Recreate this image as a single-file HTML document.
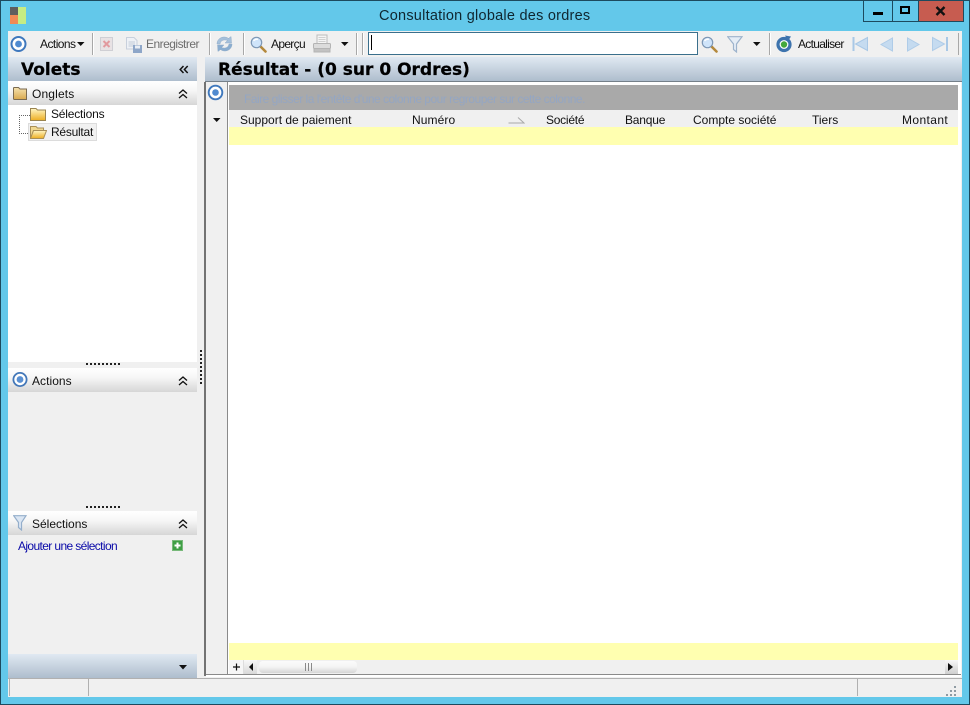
<!DOCTYPE html>
<html lang="fr"><head><meta charset="utf-8"><title>Consultation globale des ordres</title>
<style>
html,body{margin:0;padding:0;width:970px;height:705px;overflow:hidden;background:#63c8ea}
body{position:relative;font-family:"Liberation Sans",sans-serif;font-size:12px;color:#111}
div,span,svg{position:absolute;box-sizing:border-box}
.t{white-space:nowrap;line-height:14px}
.g{color:#6d6d6d}
.sep{width:1px;top:33px;height:22px;background:#a8a8a8;box-shadow:1px 0 0 #fff}
.ph{left:8px;width:189px;height:24px;background:linear-gradient(#fff 0%,#f6f6f6 40%,#d6d6d6 100%)}
.blue{background:linear-gradient(#e0e9f2,#aebdcd)}
.dots{left:86px;width:34px;height:2px;background:repeating-linear-gradient(90deg,#222 0 2px,transparent 2px 4px)}
.h{font-family:"DejaVu Sans",sans-serif;font-weight:bold;font-size:17px;color:#000;line-height:22px;white-space:nowrap;-webkit-text-stroke:.25px #000}
</style></head><body>
<div style="left:0;top:0;width:970px;height:705px;border:1px solid #1d4a5e"></div>

<!-- title bar -->
<svg style="left:10px;top:7px" width="16" height="17"><rect x="0" y="0" width="8" height="8" fill="#5e5e5e"/><rect x="0" y="8" width="8" height="9" fill="#f08a55"/><rect x="8" y="0" width="8" height="17" fill="#c6ec84"/></svg>
<div class="t" style="left:379px;top:8px;font-size:14.5px;line-height:17px;color:#0f2630;letter-spacing:.24px">Consultation globale des ordres</div>
<div style="left:863px;top:1px;width:29px;height:21px;border:1px solid #1d4a5e;border-top:0;border-right:0"></div>
<div style="left:892px;top:1px;width:26px;height:21px;border:1px solid #1d4a5e;border-top:0;border-right:0"></div>
<div style="left:918px;top:1px;width:46px;height:21px;background:#c75c50;border:1px solid #1d4a5e;border-top:0"></div>
<div style="left:873px;top:12px;width:10px;height:3px;background:#000"></div>
<div style="left:900px;top:6px;width:10px;height:8px;border:2px solid #000"></div>
<svg style="left:935px;top:6px" width="11" height="10"><path d="M1.5 1 L9.5 9 M9.5 1 L1.5 9" stroke="#111" stroke-width="2.4"/></svg>

<!-- client -->
<div style="left:8px;top:31px;width:954px;height:666px;background:#f0f0f0"></div>

<!-- toolbar -->
<svg style="left:10px;top:35px" width="18" height="18"><circle cx="8.5" cy="9" r="7" fill="#fff" stroke="#3f78bd" stroke-width="2"/><circle cx="8.5" cy="9" r="3.4" fill="#4f8ad0"/></svg>
<div class="t" style="left:40px;top:37px;letter-spacing:-.55px">Actions</div>
<svg style="left:77px;top:42px" width="8" height="5"><path d="M0 0H7.5L3.7 4Z" fill="#111"/></svg>
<div class="sep" style="left:92px"></div>
<svg style="left:100px;top:36px" width="14" height="16"><rect x=".5" y="1.5" width="12" height="13" fill="#e8e2e4" stroke="#cfcfd4"/><path d="M3.5 5 L9.5 11 M9.5 5 L3.5 11" stroke="#e29a9f" stroke-width="2"/></svg>
<svg style="left:126px;top:36px" width="17" height="17"><path d="M.5 1.5H8L11 4.5V13H.5Z" fill="#eef1f6" stroke="#c8d0dc"/><path d="M2.5 6H9M2.5 8H9M2.5 10H9" stroke="#c3cbd8"/><rect x="7" y="9" width="9" height="8" fill="#8ea6c8"/><rect x="9" y="9.5" width="5" height="3" fill="#e9eef5"/></svg>
<div class="t g" style="left:146px;top:37px;letter-spacing:-.52px">Enregistrer</div>
<div class="sep" style="left:209px"></div>
<svg style="left:216px;top:35px" width="17" height="18"><path d="M1 9 C1 3 8 0 12.5 3.5 L15 1.5 L15.5 8 L9 8 L11.5 5.5 C8 4 4.5 5.5 4 9Z" fill="#a5c0db" stroke="#8fabc7" stroke-width=".5"/><path d="M16 9 C16 15 9 18 4.5 14.5 L2 16.5 L1.5 10 L8 10 L5.5 12.5 C9 14 12.5 12.5 13 9Z" fill="#8aadd0" stroke="#8fabc7" stroke-width=".5"/></svg>
<div class="sep" style="left:243px"></div>
<svg style="left:250px;top:36px" width="17" height="17"><path d="M10 10 L15.5 15.5" stroke="#b4893c" stroke-width="2.6" stroke-linecap="round"/><circle cx="6.5" cy="6.5" r="5.2" fill="#cfe4fa" stroke="#7d97b5" stroke-width="1.2"/><path d="M3.5 5 Q5 3 8 3.2" stroke="#fff" stroke-width="1.4" fill="none"/></svg>
<div class="t" style="left:271px;top:37px;letter-spacing:-.68px">Aperçu</div>
<svg style="left:313px;top:34px" width="18" height="19"><rect x="4" y="1" width="10" height="9" fill="#f5f5f5" stroke="#bcbcbc"/><path d="M5.5 3.5H12.5M5.5 5.5H12.5M5.5 7.5H12.5" stroke="#d0d0d0"/><rect x=".5" y="9.5" width="17" height="5" rx="1" fill="#dcdcdc" stroke="#b4b4b4"/><rect x="1" y="14.5" width="16" height="3.5" fill="#c2c2c2" stroke="#b4b4b4"/></svg>
<svg style="left:341px;top:42px" width="8" height="5"><path d="M0 0H7.5L3.7 4Z" fill="#111"/></svg>
<div class="sep" style="left:356px"></div><div class="sep" style="left:362px"></div>
<div style="left:368px;top:32px;width:330px;height:23px;background:#fff;border:1px solid #3a6f8c"></div>
<div style="left:371px;top:35px;width:1px;height:15px;background:#000"></div>
<svg style="left:701px;top:36px" width="17" height="17"><path d="M10 10 L15.5 15.5" stroke="#b4893c" stroke-width="2.6" stroke-linecap="round"/><circle cx="6.5" cy="6.5" r="5.2" fill="#cfe4fa" stroke="#7d97b5" stroke-width="1.2"/><path d="M3.5 5 Q5 3 8 3.2" stroke="#fff" stroke-width="1.4" fill="none"/></svg>
<svg style="left:727px;top:36px" width="16" height="17"><path d="M.7 .7H15L9.5 8V16L6.5 13.5V8Z" fill="#e5edf6" stroke="#9db3cc" stroke-width="1.2"/></svg>
<svg style="left:753px;top:42px" width="8" height="5"><path d="M0 0H7.5L3.7 4Z" fill="#111"/></svg>
<div class="sep" style="left:769px"></div>
<svg style="left:775px;top:35px" width="18" height="18"><circle cx="9" cy="9.5" r="6" fill="#fff" stroke="#3d73ad" stroke-width="3.2"/><circle cx="9" cy="9.5" r="3.2" fill="#45a83c"/><path d="M10 .5 L16 1.5 L13 6Z" fill="#3d73ad"/></svg>
<div class="t" style="left:798px;top:37px;letter-spacing:-.7px">Actualiser</div>
<svg style="left:852px;top:36px" width="18" height="16"><path d="M1.5 1V15" stroke="#a9c8e6" stroke-width="2"/><path d="M15.5 1.5V14.5L3.5 8Z" fill="#c5dbf0" stroke="#a9c8e6"/></svg>
<svg style="left:880px;top:37px" width="14" height="15"><path d="M12.5 1V14L1 7.5Z" fill="#c5dbf0" stroke="#afcce8"/></svg>
<svg style="left:906px;top:37px" width="14" height="15"><path d="M1.5 1V14L13 7.5Z" fill="#c5dbf0" stroke="#afcce8"/></svg>
<svg style="left:931px;top:36px" width="18" height="16"><path d="M16 1V15" stroke="#a9c8e6" stroke-width="2"/><path d="M1.5 1.5V14.5L13.5 8Z" fill="#c5dbf0" stroke="#afcce8"/></svg>
<div class="sep" style="left:958px;box-shadow:none"></div>

<!-- left panel -->
<div class="blue" style="left:8px;top:57px;width:189px;height:24px"></div>
<div class="h" style="left:21px;top:59px">Volets</div>
<svg style="left:179px;top:65px" width="10" height="9"><path d="M4.5 1L1.2 4.5L4.5 8M8.7 1L5.4 4.5L8.7 8" fill="none" stroke="#111" stroke-width="1.5"/></svg>

<div class="ph" style="top:81px"></div>
<svg style="left:13px;top:86px" width="15" height="14"><defs><linearGradient id="a" x1="0" y1="0" x2="0" y2="1"><stop offset="0" stop-color="#f5e2ae"/><stop offset="1" stop-color="#d9a94e"/></linearGradient><linearGradient id="b" x1="0" y1="0" x2="0" y2="1"><stop offset="0" stop-color="#fff6c4"/><stop offset="1" stop-color="#edae22"/></linearGradient></defs><path d="M.5 2V12.5A1 1 0 0 0 1.5 13.5H13.5V3H7L5.5 1.5H1Z" fill="url(#a)" stroke="#7a6a50"/></svg>
<div class="t" style="left:32px;top:87px;letter-spacing:.15px">Onglets</div>
<svg style="left:178px;top:89px" width="10" height="10"><path d="M1 4.5L5 1L9 4.5M1 9L5 5.5L9 9" fill="none" stroke="#111" stroke-width="1.3"/></svg>

<div style="left:8px;top:105px;width:189px;height:257px;background:#fff"></div>
<div style="left:19px;top:115px;width:1px;height:19px;background:repeating-linear-gradient(180deg,#666 0 1px,transparent 1px 2px)"></div>
<div style="left:19px;top:115px;width:11px;height:1px;background:repeating-linear-gradient(90deg,#666 0 1px,transparent 1px 2px)"></div>
<div style="left:19px;top:133px;width:11px;height:1px;background:repeating-linear-gradient(90deg,#666 0 1px,transparent 1px 2px)"></div>
<svg style="left:30px;top:107px" width="16" height="14"><path d="M.5 1.5H6L7.5 3H15.5V13.5H.5Z" fill="url(#b)" stroke="#9a8450"/></svg>
<div class="t" style="left:51px;top:107px;letter-spacing:-.2px">Sélections</div>
<div style="left:28px;top:123px;width:69px;height:18px;background:#f1f1f1;border:1px solid #dcdcdc"></div>
<svg style="left:30px;top:125px" width="17" height="14"><path d="M.5 13.5V1.5H6L7.5 3H13.5V5.5H3.5Z" fill="#f0d890" stroke="#a98f57"/><path d="M.5 13.5L3.5 5.5H16.5L13.5 13.5Z" fill="url(#b)" stroke="#a98f57"/></svg>
<div class="t" style="left:51px;top:125px;letter-spacing:-.25px">Résultat</div>

<div class="dots" style="top:363px"></div>
<div class="ph" style="top:368px"></div>
<svg style="left:12px;top:371px" width="16" height="17"><circle cx="8" cy="8.5" r="6.6" fill="#fff" stroke="#4377b8" stroke-width="1.8"/><circle cx="8" cy="8.5" r="3.4" fill="#5a90d2"/></svg>
<div class="t" style="left:32px;top:374px;letter-spacing:.05px">Actions</div>
<svg style="left:178px;top:376px" width="10" height="10"><path d="M1 4.5L5 1L9 4.5M1 9L5 5.5L9 9" fill="none" stroke="#111" stroke-width="1.3"/></svg>

<div class="dots" style="top:506px"></div>
<div class="ph" style="top:511px"></div>
<svg style="left:13px;top:515px" width="14" height="16"><path d="M.7 .7H13L8.5 7.5V15L5.5 12.5V7.5Z" fill="#dbe6f3" stroke="#94aecb" stroke-width="1.2"/></svg>
<div class="t" style="left:32px;top:517px">Sélections</div>
<svg style="left:178px;top:519px" width="10" height="10"><path d="M1 4.5L5 1L9 4.5M1 9L5 5.5L9 9" fill="none" stroke="#111" stroke-width="1.3"/></svg>
<div class="t" style="left:18px;top:539px;color:#0a0aa8;letter-spacing:-.62px">Ajouter une sélection</div>
<svg style="left:172px;top:540px" width="11" height="11"><rect width="10" height="10" x=".5" y=".5" fill="#3f9f45" stroke="#78b97a"/><path d="M5.5 2.5V8.5M2.5 5.5H8.5" stroke="#fff" stroke-width="2"/></svg>

<div class="blue" style="left:8px;top:654px;width:189px;height:24px"></div>
<svg style="left:179px;top:665px" width="9" height="5"><path d="M0 0H8L4 4.5Z" fill="#111"/></svg>

<!-- splitter -->
<div style="left:200px;top:350px;width:2px;height:34px;background:repeating-linear-gradient(180deg,#222 0 2px,transparent 2px 4px)"></div>

<!-- main -->
<div class="blue" style="left:205px;top:57px;width:757px;height:25px;border-bottom:1px solid #75808a"></div>
<div class="h" style="left:218px;top:59px">Résultat - (0 sur 0 Ordres)</div>
<div style="left:204px;top:82px;width:2px;height:594px;background:#737373"></div>
<div style="left:206px;top:82px;width:755px;height:595px;background:#fff"></div>
<div style="left:206px;top:82px;width:21px;height:592px;background:#f0f0f0"></div>
<div style="left:227px;top:82px;width:1px;height:592px;background:#8a8a8a"></div>
<div style="left:206px;top:674px;width:755px;height:3px;background:#fff;border-top:1px solid #8a8a8a"></div>
<svg style="left:207px;top:84px" width="17" height="17"><circle cx="8.5" cy="8.5" r="6.8" fill="#fff" stroke="#3f78bd" stroke-width="1.9"/><circle cx="8.5" cy="8.5" r="3.3" fill="#4f8ad0"/></svg>
<svg style="left:213px;top:118px" width="8" height="5"><path d="M0 0H7.5L3.7 4Z" fill="#111"/></svg>
<div style="left:229px;top:85px;width:729px;height:25px;background:#a9a9a9"></div>
<div class="t" style="left:244px;top:92px;color:#94a6c3;letter-spacing:-.51px">Faire glisser la l'entête d'une colonne pour regrouper sur cette colonne.</div>
<div style="left:229px;top:110px;width:729px;height:17px;background:#f0f0f0"></div>
<div class="t" style="left:240px;top:113px">Support de paiement</div>
<div class="t" style="left:412px;top:113px;letter-spacing:.1px">Numéro</div>
<svg style="left:508px;top:116px" width="17" height="8"><path d="M.5 7H16L10 1.5" fill="none" stroke="#a8a8a8"/></svg>
<div class="t" style="left:546px;top:113px;letter-spacing:-.25px">Société</div>
<div class="t" style="left:625px;top:113px;letter-spacing:-.2px">Banque</div>
<div class="t" style="left:693px;top:113px">Compte société</div>
<div class="t" style="left:812px;top:113px">Tiers</div>
<div class="t" style="left:902px;top:113px;letter-spacing:.4px">Montant</div>
<div style="left:229px;top:127px;width:729px;height:18px;background:#ffffb0"></div>
<div style="left:229px;top:643px;width:729px;height:17px;background:#ffffb0"></div>

<!-- scrollbar -->
<div style="left:229px;top:660px;width:729px;height:14px;background:#f0f0f0"></div>
<div style="left:229px;top:660px;width:15px;height:14px;background:#f6f6f6;border-right:1px solid #ddd"></div>
<svg style="left:232px;top:662px" width="9" height="10"><path d="M4.5 1.5V8.5M1 5H8" stroke="#111" stroke-width="1.2"/></svg>
<div style="left:244px;top:660px;width:13px;height:14px;background:linear-gradient(#f8f8f8,#d8d8d8)"></div>
<svg style="left:249px;top:663px" width="5" height="8"><path d="M4 0V8L0 4Z" fill="#111"/></svg>
<div style="left:259px;top:661px;width:98px;height:12px;border-radius:4px;background:linear-gradient(#fbfbfb,#f4f4f4 50%,#d6d6d6)"></div>
<div style="left:305px;top:663px;width:7px;height:8px;background:repeating-linear-gradient(90deg,#8a8a8a 0 1px,transparent 1px 3px)"></div>
<div style="left:945px;top:660px;width:13px;height:14px;background:linear-gradient(#f8f8f8,#cfcfcf)"></div>
<svg style="left:948px;top:663px" width="6" height="8"><path d="M0 0V8L5 4Z" fill="#111"/></svg>

<!-- status bar -->
<div style="left:8px;top:678px;width:954px;height:19px;background:#f0f0f0;border-top:1px solid #b0b0b0"></div>
<div style="left:9px;top:679px;width:1px;height:17px;background:#b0b0b0"></div>
<div style="left:88px;top:679px;width:1px;height:17px;background:#b0b0b0"></div>
<div style="left:857px;top:679px;width:1px;height:17px;background:#b0b0b0"></div>
<svg style="left:946px;top:685px" width="12" height="11"><path d="M8 1h2v2H8zM4 5h2v2H4zM8 5h2v2H8zM0 9h2v2H0zM4 9h2v2H4zM8 9h2v2H8z" fill="#8f9ba3"/></svg>
</body></html>
